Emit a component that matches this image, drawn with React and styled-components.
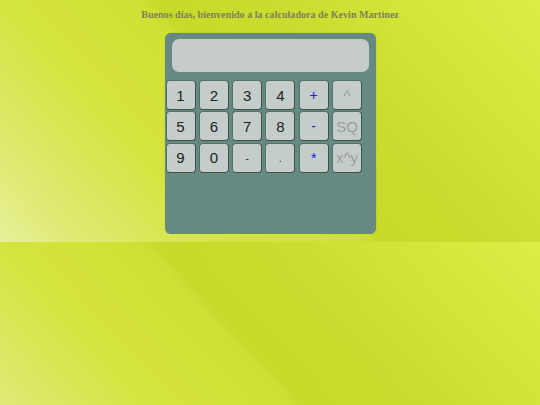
import React from 'react'
import styled, { createGlobalStyle } from 'styled-components'

const GlobalStyle = createGlobalStyle`
  html {
    background: linear-gradient(47deg, #e8f09c 0%, #e0eb78 9%, #dbe862 17%, #d4e43e 30%, #d0e135 47%, #c6da2a 50%, #cadd2e 65%, #dcee46 100%);
    background-size: 100% 242px;
    background-repeat: repeat;
  }
  body {
    margin: 8px;
  }
`

const Title = styled.div`
  font-family: "Liberation Serif", "Times New Roman", serif;
  font-weight: bold;
  font-size: 10.1px;
  line-height: 13px;
  color: #7c8355;
  text-align: center;
  margin: 0 0 12px;
`

const Calc = styled.div`
  width: 211px;
  height: 201px;
  margin: 0 auto;
  box-sizing: border-box;
  padding: 6px 2px 0 1px;
  background: #668a82;
  border-radius: 6px;
  box-shadow: 0 0 1px rgba(60, 80, 60, 0.5);
`

const Screen = styled.div`
  height: 33px;
  margin: 0 5px 8px 6px;
  background: #c5cccb;
  border-radius: 7px;
`

const Keys = styled.div`
  display: grid;
  grid-template-columns: repeat(6, 30px);
  grid-auto-rows: 30px;
  column-gap: 3.3px;
  row-gap: 1.3px;
`

const looks = {
  num: { color: '#222222', size: '15px' },
  sym: { color: '#333333', size: '11px' },
  op: { color: '#1c1ce0', size: '14px' },
  fn: { color: '#9a9e9d', size: '15px' },
}

const Key = styled.button`
  box-sizing: border-box;
  padding: 0;
  display: flex;
  align-items: center;
  justify-content: center;
  background: #c5cdcb;
  border: 1px solid #55716b;
  border-right-color: #3c524d;
  border-bottom-color: #3c524d;
  border-radius: 4px;
  font-family: "Liberation Sans", Arial, sans-serif;
  font-size: ${p => looks[p.$kind].size};
  color: ${p => looks[p.$kind].color};
  cursor: pointer;
`

const keys = [
  ['1', 'num'], ['2', 'num'], ['3', 'num'], ['4', 'num'], ['+', 'op'], ['^', 'fn'],
  ['5', 'num'], ['6', 'num'], ['7', 'num'], ['8', 'num'], ['-', 'op'], ['SQ', 'fn'],
  ['9', 'num'], ['0', 'num'], ['-', 'sym'], ['.', 'sym'], ['*', 'op'], ['x^y', 'fn'],
]

const App = () => {
  return (
    <>
      <GlobalStyle />
      <Title>Buenos días, bienvenido a la calculadora de Kevin Martinez</Title>
      <Calc>
        <Screen />
        <Keys>
          {keys.map(([label, kind], i) => (
            <Key key={i} $kind={kind}>{label}</Key>
          ))}
        </Keys>
      </Calc>
    </>
  )
}

export default App
